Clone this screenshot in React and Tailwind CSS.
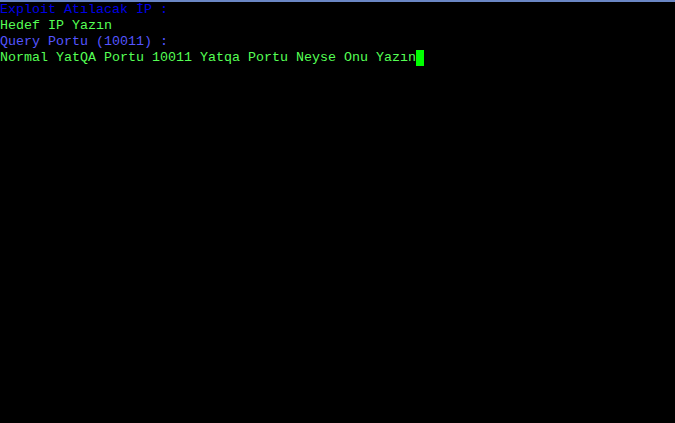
export default function App() {
  return (
    <div className="w-[675px] h-[423px] bg-black overflow-hidden border-t-2 border-[#6a86c4]">
      <div
        className="text-[13.33px] leading-[16px] whitespace-pre"
        style={{ fontFamily: '"Liberation Mono", "DejaVu Sans Mono", monospace' }}
      >
        <div className="h-4 text-[#0000e6]">Exploit Atılacak İP :</div>
        <div className="h-4 text-[#55ff55]">Hedef IP Yazın</div>
        <div className="h-4 text-[#5555ff]">Query Portu (10011) :</div>
        <div className="h-4 text-[#55ff55] flex">
          <span>Normal YatQA Portu 10011 Yatqa Portu Neyse Onu Yazın</span>
          <span className="inline-block w-2 h-4 bg-[#00ff00]"></span>
        </div>
      </div>
    </div>
  );
}
